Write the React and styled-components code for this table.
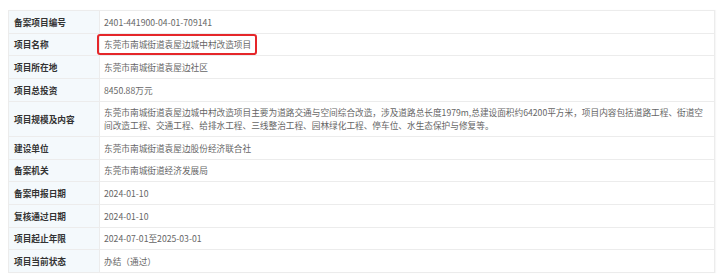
import React from 'react';
import styled, { createGlobalStyle } from 'styled-components';

const rows = [
  { label: '备案项目编号', value: '2401-441900-04-01-709141' },
  { label: '项目名称', value: '东莞市南城街道袁屋边城中村改造项目', marked: true },
  { label: '项目所在地', value: '东莞市南城街道袁屋边社区' },
  { label: '项目总投资', value: '8450.88万元' },
  {
    label: '项目规模及内容',
    value:
      '东莞市南城街道袁屋边城中村改造项目主要为道路交通与空间综合改造，涉及道路总长度1979m,总建设面积约64200平方米，项目内容包括道路工程、街道空间改造工程、交通工程、给排水工程、三线整治工程、园林绿化工程、停车位、水生态保护与修复等。',
  },
  { label: '建设单位', value: '东莞市南城街道袁屋边股份经济联合社' },
  { label: '备案机关', value: '东莞市南城街道经济发展局' },
  { label: '备案申报日期', value: '2024-01-10' },
  { label: '复核通过日期', value: '2024-01-10' },
  { label: '项目起止年限', value: '2024-07-01至2025-03-01' },
  { label: '项目当前状态', value: '办结（通过）' },
];

const App = () => {
  return (
    <>
      <GlobalStyle />
      <Page>
        <InfoTable>
          {rows.map((row) => (
            <Row key={row.label}>
              <Label>{row.label}</Label>
              <Value>
                {row.marked ? <Marked>{row.value}</Marked> : row.value}
              </Value>
            </Row>
          ))}
        </InfoTable>
      </Page>
    </>
  );
};

export default App;

const GlobalStyle = createGlobalStyle`
  html, body {
    margin: 0;
    padding: 0;
    background: #fff;
  }
  body {
    font-family: "Noto Sans CJK SC", "Noto Sans", sans-serif;
  }
`;

const Page = styled.div`
  padding: 10px 5px 7px 8px;
`;

const InfoTable = styled.div`
  display: flex;
  flex-direction: column;
  border: 1px solid #ececec;
  border-bottom: none;
  box-shadow: 1px 0 1px rgba(0, 0, 0, 0.03);
`;

const Row = styled.div`
  display: grid;
  grid-template-columns: 91px 1fr;
  border-bottom: 1px solid #ececec;
  font-size: 8.67px;
  line-height: 12.67px;
`;

const Label = styled.div`
  background: #f4f9fc;
  color: #333;
  font-weight: bold;
  padding: 4.5px 5px;
  border-right: 1px solid #ececec;
  display: flex;
  align-items: center;
`;

const Value = styled.div`
  color: #666;
  padding: 4.5px 6px 4.5px 4px;
`;

const Marked = styled.span`
  position: relative;

  &::after {
    content: '';
    position: absolute;
    left: -7px;
    right: -6px;
    top: -4px;
    bottom: -4.5px;
    border: 2px solid #e5262a;
    border-radius: 3px;
  }
`;
